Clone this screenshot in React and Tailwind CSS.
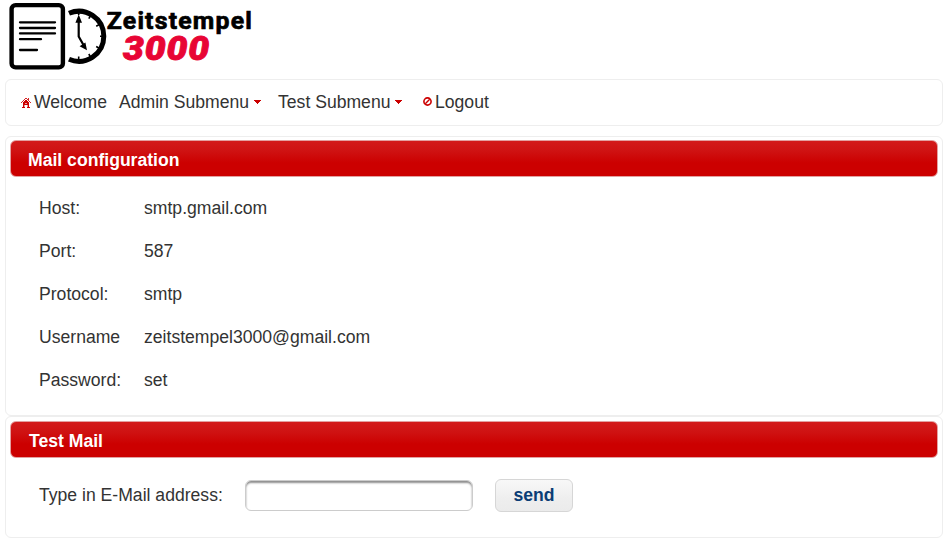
import React from "react";

const mailSettings = [
  ["Host:", "smtp.gmail.com"],
  ["Port:", "587"],
  ["Protocol:", "smtp"],
  ["Username", "zeitstempel3000@gmail.com"],
  ["Password:", "set"],
];

function Logo() {
  return (
    <svg className="block" width="260" height="79" viewBox="0 0 260 79" role="img" aria-label="Zeitstempel 3000">
      <rect x="11.6" y="5.1" width="51.3" height="62.3" rx="4" fill="none" stroke="#000" strokeWidth="4.4" />
      <g stroke="#000" strokeWidth="2.3" strokeLinecap="round">
        <path d="M20 22.3H55M20 28H55M20 33.4H55M20 39.2H41M20 50H37" />
      </g>
      <path d="M69 13.3A25 25 0 1 1 69 59.3" fill="none" stroke="#000" strokeWidth="5" />
      <path d="M78.7 22V36.5L83.5 45" fill="none" stroke="#000" strokeWidth="2.2" />
      <path d="M78.7 14.5L82 22.8H75.4ZM87 50.3L79.6 46.2L85.4 42.4Z" fill="#000" />
      <path
        d="M78.7 12V15M91 15L88.8 18.6M100.2 24L96.2 26.3M105 36.3H100M100.2 48.8L96.2 46.5M91 57.8L88.8 54M78.7 61V56.5"
        stroke="#000"
        strokeWidth="1.6"
      />
      <text x="106.8" y="28.8" textLength="145" lengthAdjust="spacing" fontSize="24.8" stroke="#000" strokeWidth="0.7" className="font-['Roboto','Liberation_Sans',sans-serif] font-bold">
        Zeitstempel
      </text>
      <text x="123" y="59.6" textLength="87" lengthAdjust="spacingAndGlyphs" letterSpacing="0.8" fill="#e80535" stroke="#e80535" strokeWidth="0.9" fontSize="33.5" className="font-['Roboto','Liberation_Sans',sans-serif] font-black italic">
        3000
      </text>
    </svg>
  );
}

function HomeIcon() {
  return (
    <svg className="mr-[3px] mt-[2px] block" width="10" height="10" viewBox="0 0 10 10" shapeRendering="crispEdges" fill="#c00">
      <path d="M4 0h2v1h1v1h1v1h1v1h1v1H9V4H8V3H7V2H6V1H4v1H3v1H2v1H1v1H0V4h1V3h1V2h1V1h1zM7 0h1v2H7z" fillOpacity=".85" />
      <path d="M4 2h2v1h1v1h1v5h1v1H6V7H4v3H1V9h1V4h1V3h1z" />
      <path d="M4 5h2v1H4zM3 7h1v2H3zM6 7h1v2H6z" fill="#fff" fillOpacity=".6" />
    </svg>
  );
}

function LogoutIcon() {
  return (
    <svg className="mr-[3px] block" width="9" height="9" viewBox="0 0 9 9" fill="none" stroke="#c00">
      <circle cx="4.5" cy="4.5" r="3.6" strokeWidth="1.6" />
      <path d="M2.3 6.7L6.7 2.3" strokeWidth="1.4" />
    </svg>
  );
}

function Caret() {
  return (
    <svg className="ml-[5px] block" width="7" height="4" viewBox="0 0 7 4" shapeRendering="crispEdges" fill="#c00">
      <path d="M0 0h7v1H6v1H5v1H4v1H3V3H2V2H1V1H0z" />
    </svg>
  );
}

function PanelHeader({ children, className }) {
  return (
    <h2
      className={`h-[37px] rounded-[6px] border border-[#e3a1a1] bg-[linear-gradient(to_bottom,#d31b1b_0%,#cf1212_30%,#c00_62%,#c00_100%)] bg-origin-border font-bold leading-[38px] text-white ${className}`}
    >
      {children}
    </h2>
  );
}

export default function App() {
  return (
    <div className="h-[548px] w-[951px] overflow-hidden bg-white font-['Liberation_Sans',Arial,sans-serif] text-[17.6px] text-[#333]">
      <header>
        <Logo />
      </header>
      <div className="ml-[5px] w-[938px]">
        <nav className="flex h-[47px] items-center rounded-[6px] border border-[#eee] pb-[2px] pl-[15px] leading-[20px]">
          <a className="flex w-[98px] items-center"><HomeIcon />Welcome</a>
          <a className="flex w-[159px] items-center">Admin Submenu<Caret /></a>
          <a className="flex w-[145px] items-center">Test Submenu<Caret /></a>
          <a className="flex items-center"><LogoutIcon />Logout</a>
        </nav>
        <section className="mt-[10px] h-[280px] rounded-[6px] border border-[#eee] px-1 pt-[3px]">
          <PanelHeader className="pl-[17px]">Mail configuration</PanelHeader>
          <dl className="grid auto-rows-[43px] grid-cols-[105px_1fr] items-center pl-[29px] pt-[10px]">
            {mailSettings.map(([label, value]) => (
              <React.Fragment key={label}>
                <dt>{label}</dt>
                <dd>{value}</dd>
              </React.Fragment>
            ))}
          </dl>
        </section>
        <section className="h-[122px] rounded-[6px] border border-[#eee] px-1 pt-1">
          <PanelHeader className="pl-[18px]">Test Mail</PanelHeader>
          <form className="flex items-center pl-[29px] pt-[21px]" onSubmit={(e) => e.preventDefault()}>
            <label htmlFor="mail" className="w-[206px]">Type in E-Mail address:</label>
            <input
              id="mail"
              className="h-[31px] w-[228px] rounded-[6px] border border-[#ccc] bg-white px-2 shadow-[inset_0_2px_2px_#8f8f8f] outline-none"
            />
            <button className="ml-[22px] h-[33px] w-[78px] rounded-[6px] border border-[#d6d6d6] bg-[linear-gradient(to_bottom,#f8f8f8,#eee_60%,#ebebeb)] font-bold text-[#0a3d75]">
              send
            </button>
          </form>
        </section>
      </div>
    </div>
  );
}
